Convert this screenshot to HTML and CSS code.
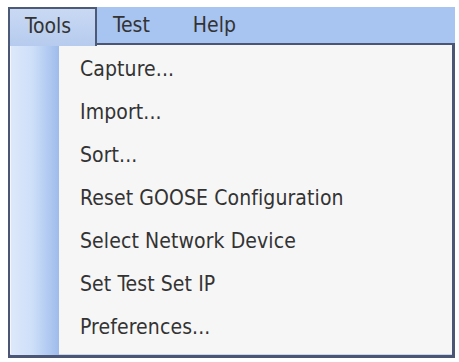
FILE: index.html
```html
<!DOCTYPE html>
<html>
<head>
<meta charset="utf-8">
<link rel="stylesheet" href="styles.css">
</head>
<body>
<div class="menubar">
  <div class="menu-item active">Tools</div>
  <div class="menu-item">Test</div>
  <div class="menu-item">Help</div>
</div>
<div class="dropdown">
  <div class="gutter"></div>
  <ul class="items">
    <li>Capture...</li>
    <li>Import...</li>
    <li>Sort...</li>
    <li>Reset GOOSE Configuration</li>
    <li>Select Network Device</li>
    <li>Set Test Set IP</li>
    <li>Preferences...</li>
  </ul>
</div>
</body>
</html>
```
FILE: styles.css
```css
html, body {
  margin: 0;
  padding: 0;
  background: #ffffff;
}
body {
  font-family: "DejaVu Sans Condensed", "DejaVu Sans", sans-serif;
  font-size: 21px;
  color: #333333;
  padding-top: 7px;
}
.menubar {
  margin-left: 8px;
  width: 447px;
  height: 36px;
  background: #a8c4f1;
  display: flex;
  align-items: stretch;
  position: relative;
  z-index: 2;
}
.menu-item {
  padding: 0 27px 0 16px;
  line-height: 37px;
  box-sizing: border-box;
}
.menu-item.active {
  width: 89px;
  padding-left: 15px;
  padding-right: 0;
  height: 39px;
  line-height: 35px;
  border: 2px solid #4c5a78;
  border-bottom: none;
  background: linear-gradient(#c9d9f4, #b6cbee);
}
.dropdown {
  margin-left: 8px;
  width: 447px;
  height: 315px;
  box-sizing: border-box;
  border: 2px solid #4a5674;
  border-right-width: 3px;
  border-bottom-width: 3px;
  background: #f6f6f6;
  display: flex;
  box-shadow: inset 0 -1px 0 #c9d6ee;
}
.gutter {
  width: 48px;
  margin-left: 1px;
  background: linear-gradient(90deg, #dde8fb 0%, #cddff8 45%, #a7c2ef 90%, #9fbbe9 100%);
}
.items {
  list-style: none;
  margin: 0;
  padding: 3px 0 0 21px;
  letter-spacing: 0.1px;
}
.items li {
  height: 43px;
  line-height: 43px;
  white-space: nowrap;
}
```
